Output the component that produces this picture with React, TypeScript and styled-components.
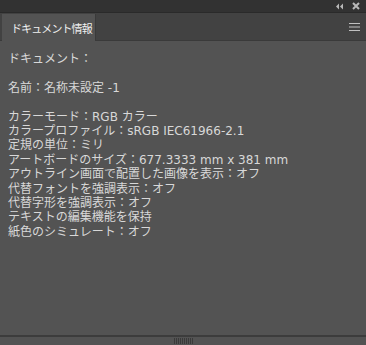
import React from 'react';
import styled, { createGlobalStyle } from 'styled-components';

const GlobalStyle = createGlobalStyle`
  html, body {
    margin: 0;
    padding: 0;
    background: #535353;
  }
`;

const Panel = styled.div`
  display: flex;
  flex-direction: column;
  width: 366px;
  height: 345px;
  background-color: #535353;
  font-family: "Noto Sans CJK JP", "Noto Sans", sans-serif;
  overflow: hidden;
`;

const TopBar = styled.div`
  display: flex;
  align-items: center;
  justify-content: flex-end;
  gap: 8px;
  height: 12px;
  padding-right: 6px;
  background-color: #323232;
  border-bottom: 1px solid #2a2a2a;
`;

const TabRow = styled.div`
  display: flex;
  align-items: stretch;
  height: 27px;
  background-color: #424242;
  border-bottom: 1px solid #3a3a3a;
`;

const Tab = styled.div`
  display: flex;
  align-items: center;
  width: 94px;
  margin-left: 2px;
  margin-top: 1px;
  margin-bottom: -1px;
  padding-left: 9px;
  box-sizing: border-box;
  background-color: #535353;
  color: #f0f0f0;
  font-size: 11px;
  letter-spacing: -0.9px;
  white-space: nowrap;
  border-right: 1px solid #3a3a3a;
`;

const Spacer = styled.div`
  flex: 1;
`;

const MenuButton = styled.div`
  display: flex;
  align-items: center;
  padding-right: 6px;
`;

const Content = styled.div`
  flex: 1;
  padding: 11px 8px 0 8px;
  color: #d8d8d8;
  font-family: "DejaVu Sans", "Noto Sans CJK JP", sans-serif;
  font-size: 12px;
  line-height: 14.4px;
`;

const Line = styled.div<{ $gap?: boolean }>`
  white-space: nowrap;
  margin-bottom: ${({ $gap }) => ($gap ? '14.4px' : '0')};
`;

const Bottom = styled.div`
  display: flex;
  justify-content: center;
  height: 8px;
  border-top: 2px solid #3c3c3c;
  background-color: #535353;
`;

const Grip = styled.div`
  width: 19px;
  height: 6px;
  margin-top: 1px;
  background: repeating-linear-gradient(90deg, #3a3a3a 0 1px, transparent 1px 2px);
`;

const lines: Array<{ text: string; gap?: boolean }> = [
  { text: 'ドキュメント：', gap: true },
  { text: '名前：名称未設定 -1', gap: true },
  { text: 'カラーモード：RGB カラー' },
  { text: 'カラープロファイル：sRGB IEC61966-2.1' },
  { text: '定規の単位：ミリ' },
  { text: 'アートボードのサイズ：677.3333 mm x 381 mm' },
  { text: 'アウトライン画面で配置した画像を表示：オフ' },
  { text: '代替フォントを強調表示：オフ' },
  { text: '代替字形を強調表示：オフ' },
  { text: 'テキストの編集機能を保持' },
  { text: '紙色のシミュレート：オフ' },
];

export default function App() {
  return (
    <Panel>
      <GlobalStyle />
      <TopBar>
        <svg width="9" height="7" viewBox="0 0 9 7">
          <path d="M4 0.5 L1 3.5 L4 6.5 Z M8 0.5 L5 3.5 L8 6.5 Z" fill="#b8b8b8" />
        </svg>
        <svg width="8" height="8" viewBox="0 0 8 8">
          <path d="M1 1 L7 7 M7 1 L1 7" stroke="#b8b8b8" strokeWidth="2" />
        </svg>
      </TopBar>
      <TabRow>
        <Tab>ドキュメント情報</Tab>
        <Spacer />
        <MenuButton>
          <svg width="11" height="8" viewBox="0 0 11 8">
            <path d="M0 0.5 H11 M0 4 H11 M0 7.5 H11" stroke="#c0c0c0" strokeWidth="1" />
          </svg>
        </MenuButton>
      </TabRow>
      <Content>
        {lines.map((l) => (
          <Line key={l.text} $gap={l.gap}>{l.text}</Line>
        ))}
      </Content>
      <Bottom>
        <Grip />
      </Bottom>
    </Panel>
  );
}
